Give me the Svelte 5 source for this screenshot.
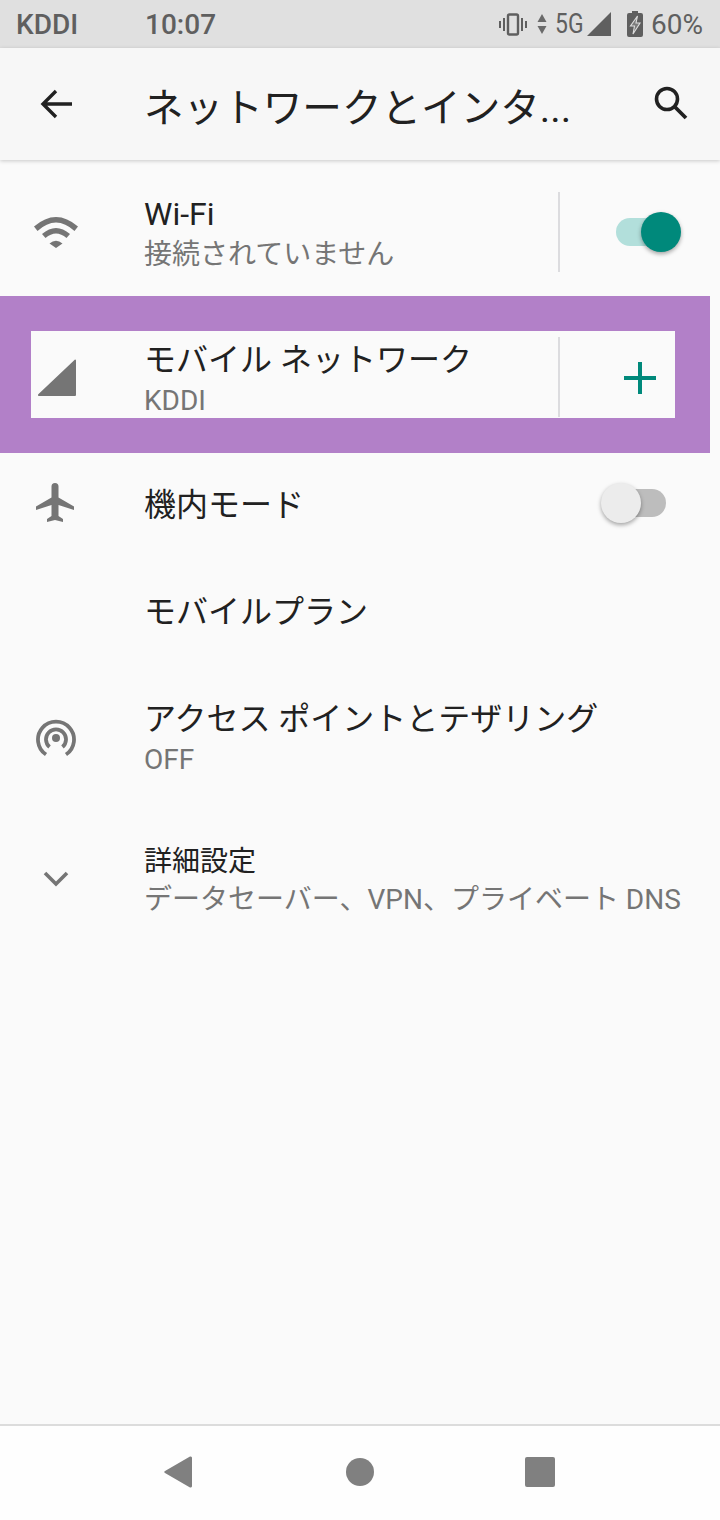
<script>
  const teal = '#00897b';
</script>

<div class="screen">
  <div class="status">
    <span class="carrier">KDDI</span>
    <span class="clock">10:07</span>
    <div class="status-right">
      <svg class="vib" width="28" height="24" viewBox="0 0 28 24"><path d="M0 9h2v7H0zM4 6h2v13H4zM22 6h2v13h-2zM26 9h2v7h-2z" fill="#5f5f5f"/><rect x="9" y="2.5" width="10" height="20" rx="1.5" fill="none" stroke="#5f5f5f" stroke-width="2.4"/></svg>
      <svg class="updown" width="10" height="22" viewBox="0 0 10 22"><path d="M5 1l4.500 8h-9zM5 21l-4.500-8h9z" fill="#6a6a6a"/></svg>
      <span class="net">5G</span>
      <svg class="sig" width="26" height="26" viewBox="0 0 26 26"><path d="M25 1v24H1z" fill="#5f5f5f"/></svg>
      <svg class="bat" width="16" height="26" viewBox="0 0 16 26"><path d="M5 0h6v2h3a2 2 0 0 1 2 2v20a2 2 0 0 1-2 2H2a2 2 0 0 1-2-2V4a2 2 0 0 1 2-2h3z" fill="#5f5f5f"/><path d="M10.500 5 3.500 15h4L6 23l7-11H9z" fill="#7c7c7c" stroke="#dedede" stroke-width="1.100"/></svg>
      <span class="pct">60%</span>
    </div>
  </div>

  <header class="toolbar">
    <svg class="back" width="34" height="32" viewBox="0 0 34 32"><path d="M33 16H4M17 3 4 16l13 13" fill="none" stroke="#212121" stroke-width="3.400"/></svg>
    <h1>ネットワークとインタ...</h1>
    <svg class="search" width="36" height="36" viewBox="0 0 36 36"><circle cx="15" cy="15" r="10.500" fill="none" stroke="#212121" stroke-width="3.600"/><path d="M22.500 22.500 34 34" stroke="#212121" stroke-width="3.800"/></svg>
  </header>

  <main class="list">
    <div class="row wifi">
      <div class="icon">
        <svg class="wifi-icon" width="46" height="32" viewBox="0 0 46 32"><path d="M1 10.500Q23 -8.500 45 10.500L41.500 15Q23 -2 4.500 15zM9 18Q23 6 37 18L33.500 22Q23 13 12.500 22zM16.500 27.500Q23 22 29.500 27.500L23 32z" fill="#757575"/></svg>
      </div>
      <div class="text">
        <div class="title">Wi-Fi</div>
        <div class="sub">接続されていません</div>
      </div>
      <div class="divider"></div>
      <div class="end">
        <div class="switch"><span class="track"></span><span class="thumb"></span></div>
      </div>
    </div>

    <div class="frame">
      <div class="row mobile">
        <div class="icon">
          <svg class="cell" width="40" height="40" viewBox="0 0 40 40"><path d="M38 1.500a1 1 0 0 1 1 1V37a1 1 0 0 1-1 1H2a1 1 0 0 1-.7-1.700z" fill="#757575"/></svg>
        </div>
        <div class="text">
          <div class="title">モバイル ネットワーク</div>
          <div class="sub">KDDI</div>
        </div>
        <div class="divider"></div>
        <div class="end">
          <svg class="plus" width="32" height="32" viewBox="0 0 32 32"><path d="M14 0h4v14h14v4H18v14h-4V18H0v-4h14z" fill={teal}/></svg>
        </div>
      </div>
    </div>

    <div class="row plain first">
      <div class="icon">
        <svg class="plane" width="40" height="40" viewBox="0 0 40 40"><path d="M23.500 14.500V3.500a3.500 3.500 0 0 0-7 0v11L1 23.500V27l15.500-5v11L12 36v3l8-2 8 2v-3l-4.500-3V22L39 27v-3.500z" fill="#757575"/></svg>
      </div>
      <div class="text"><div class="title">機内モード</div></div>
      <div class="end off">
        <div class="switch"><span class="track"></span><span class="thumb"></span></div>
      </div>
    </div>

    <div class="row plain second">
      <div class="icon"></div>
      <div class="text"><div class="title">モバイルプラン</div></div>
    </div>

    <div class="row hotspot">
      <div class="icon">
        <svg width="40" height="38" viewBox="0 0 40 38"><circle cx="20" cy="19" r="4" fill="#757575"/><path d="M10 35.500a18 18 0 1 1 20 0M13.500 28a10 10 0 1 1 13 0" fill="none" stroke="#757575" stroke-width="3.800"/></svg>
      </div>
      <div class="text">
        <div class="title">アクセス ポイントとテザリング</div>
        <div class="sub">OFF</div>
      </div>
    </div>

    <div class="row advanced">
      <div class="icon">
        <svg class="chev" width="26" height="16" viewBox="0 0 26 16"><path d="M2 2l11 11L24 2" fill="none" stroke="#757575" stroke-width="3.600"/></svg>
      </div>
      <div class="text">
        <div class="title small">詳細設定</div>
        <div class="sub">データセーバー、VPN、プライベート DNS</div>
      </div>
    </div>
  </main>

  <nav class="navbar">
    <svg width="28" height="32" viewBox="0 0 28 32"><path d="M26 .5a1.500 1.500 0 0 1 2 1.500v28a1.500 1.500 0 0 1-2 1.500L1 17a1.200 1.200 0 0 1 0-2z" fill="#808080"/></svg>
    <span class="home"></span>
    <span class="recent"></span>
  </nav>
</div>

<style>
  :global(body) {
    margin: 0;
    background: #fafafa;
  }

  .screen {
    width: 720px;
    height: 1520px;
    display: flex;
    flex-direction: column;
    font-family: Roboto, "Noto Sans CJK JP", sans-serif;
    overflow: hidden;
    background: #fafafa;
  }

  .status {
    height: 48px;
    background: #e0e0e0;
    display: flex;
    align-items: center;
    padding: 0 17px 0 16px;
    color: #5f5f5f;
    font-size: 28px;
    font-weight: 500;
  }

  .carrier {
    width: 129px;
  }

  .status-right {
    margin-left: auto;
    display: flex;
    align-items: center;
  }

  .updown {
    margin-left: 10px;
  }

  .net {
    margin-left: 8px;
    font-weight: 400;
    font-size: 27px;
    transform: scaleX(0.85);
    transform-origin: left;
    width: 28px;
  }

  .sig {
    margin-left: 3px;
  }

  .bat {
    margin-left: 15px;
  }

  .pct {
    margin-left: 8px;
    font-weight: 400;
  }

  .toolbar {
    height: 112px;
    background: #f7f7f7;
    display: flex;
    align-items: center;
    box-shadow: 0 1px 4px rgba(0, 0, 0, 0.2);
    position: relative;
    padding-left: 39px;
  }

  .toolbar h1 {
    margin: 0 0 0 71px;
    font-size: 39.6px;
    font-weight: 400;
    color: #212121;
    white-space: nowrap;
    width: 508px;
  }

  .search {
    margin-top: -4px;
  }

  .list {
    flex: 1;
    padding-top: 8px;
  }

  .row {
    display: flex;
    align-items: center;
    width: 720px;
    box-sizing: border-box;
  }

  .icon {
    width: 144px;
    padding-left: 36px;
    box-sizing: border-box;
    flex: none;
    display: flex;
  }

  .text {
    flex: 1;
    min-width: 0;
  }

  .title {
    font-size: 32px;
    line-height: 42px;
    color: #212121;
  }

  .title.small {
    font-size: 28px;
    line-height: 38px;
  }

  .sub {
    font-size: 28px;
    line-height: 38px;
    color: #757575;
  }

  .divider {
    width: 2px;
    height: 80px;
    background: #dcdcdf;
    flex: none;
    margin-left: 1px;
  }

  .end {
    width: 160px;
    flex: none;
    display: flex;
    justify-content: center;
  }

  .switch {
    position: relative;
    width: 50px;
    height: 40px;
    margin-left: 2px;
  }

  .track {
    position: absolute;
    left: 0;
    top: 6px;
    width: 50px;
    height: 28px;
    border-radius: 14px;
    background: #b2dfdb;
  }

  .thumb {
    position: absolute;
    left: 25px;
    top: 0;
    width: 40px;
    height: 40px;
    border-radius: 50%;
    background: #00897b;
    box-shadow: 0 2px 4px rgba(0, 0, 0, 0.35);
  }

  .wifi {
    height: 128px;
  }

  .wifi-icon {
    margin-left: -3px;
  }

  .wifi .text {
    padding-top: 6px;
  }

  .wifi .title {
    line-height: 40px;
  }

  .wifi .sub {
    line-height: 42px;
  }

  .frame {
    width: 710px;
    height: 157px;
    box-sizing: border-box;
    border-style: solid;
    border-color: #b280c8;
    border-width: 35px 35px 35px 31px;
    background: #fafafa;
    overflow: hidden;
  }

  .mobile {
    margin-left: -31px;
    padding-top: 6px;
    height: 87px;
    align-items: flex-start;
  }

  .mobile .icon {
    padding-left: 37px;
    padding-top: 21px;
  }

  .mobile .text {
    padding-top: 2px;
  }

  .mobile .sub,
  .hotspot .sub {
    margin-top: 1px;
  }

  .mobile .end {
    padding-top: 25px;
  }

  .first {
    height: 104px;
  }

  .second {
    height: 108px;
  }

  .second .text {
    padding-top: 2px;
  }

  .plane {
    margin: -4px 0 0 -1px;
  }

  .off {
    margin: -4px 0 0 auto;
  }

  .off .track {
    background: #bdbdbd;
  }

  .off .thumb {
    left: -15px;
    background: #ececec;
  }

  .hotspot {
    height: 146px;
  }

  .hotspot .text {
    padding-top: 1px;
  }

  .advanced {
    height: 136px;
  }

  .advanced .text {
    padding-top: 4px;
  }

  .chev {
    margin-left: 7px;
  }

  .navbar {
    height: 96px;
    flex: none;
    border-top: 2px solid #dcdcdc;
    background: #fefefe;
    box-sizing: border-box;
    display: flex;
    align-items: center;
    padding: 0 0 2px 164px;
  }

  .home {
    width: 28px;
    height: 28px;
    border-radius: 50%;
    background: #808080;
    margin-left: 154px;
  }

  .recent {
    width: 30px;
    height: 30px;
    border-radius: 2px;
    background: #808080;
    margin-left: 151px;
  }
</style>
